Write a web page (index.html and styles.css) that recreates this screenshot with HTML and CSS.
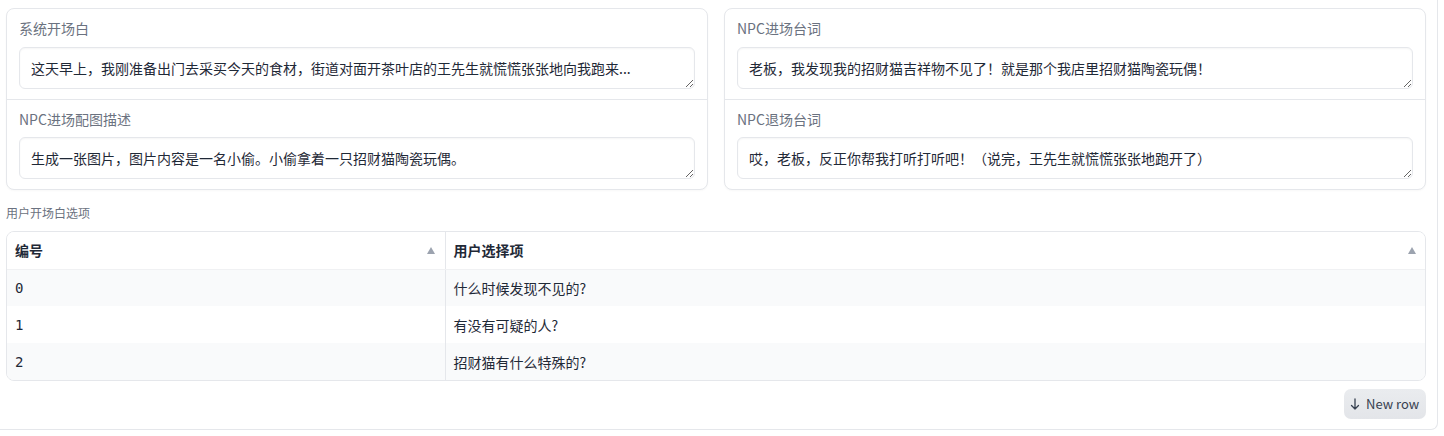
FILE: index.html
```html
<!DOCTYPE html>
<html lang="zh">
<head>
<meta charset="utf-8">
<title>NPC</title>
<link rel="stylesheet" href="styles.css">
</head>
<body>
<div class="outer">
  <div class="cols">
    <div class="panel">
      <div class="field">
        <div class="label">系统开场白</div>
        <textarea class="input" rows="1">这天早上，我刚准备出门去采买今天的食材，街道对面开茶叶店的王先生就慌慌张张地向我跑来...</textarea>
      </div>
      <div class="field">
        <div class="label">NPC进场配图描述</div>
        <textarea class="input" rows="1">生成一张图片，图片内容是一名小偷。小偷拿着一只招财猫陶瓷玩偶。</textarea>
      </div>
    </div>
    <div class="panel">
      <div class="field">
        <div class="label">NPC进场台词</div>
        <textarea class="input" rows="1">老板，我发现我的招财猫吉祥物不见了！就是那个我店里招财猫陶瓷玩偶！</textarea>
      </div>
      <div class="field">
        <div class="label">NPC退场台词</div>
        <textarea class="input" rows="1">哎，老板，反正你帮我打听打听吧！（说完，王先生就慌慌张张地跑开了）</textarea>
      </div>
    </div>
  </div>
  <div class="small-label">用户开场白选项</div>
  <div class="table-wrap">
    <table class="grid">
      <thead>
        <tr>
          <th class="c1"><div class="th-inner"><span>编号</span><span class="sort"></span></div></th>
          <th class="c2"><div class="th-inner"><span>用户选择项</span><span class="sort"></span></div></th>
        </tr>
      </thead>
      <tbody>
        <tr class="odd"><td class="c1 mono">0</td><td class="c2">什么时候发现不见的?</td></tr>
        <tr><td class="c1 mono">1</td><td class="c2">有没有可疑的人?</td></tr>
        <tr class="odd"><td class="c1 mono">2</td><td class="c2">招财猫有什么特殊的?</td></tr>
      </tbody>
    </table>
  </div>
  <div class="actions">
    <button class="btn"><svg class="arrow" width="10" height="12" viewBox="0 0 10 12" fill="none" stroke="#374151" stroke-width="1.3" stroke-linecap="round" stroke-linejoin="round"><path d="M5 1v10M1.5 7.5L5 11l3.5-3.5"/></svg><span>New row</span></button>
  </div>
</div>
</body>
</html>
```
FILE: styles.css
```css
* { box-sizing: border-box; }
html, body { margin: 0; padding: 0; background: #fff; }
body {
  font-family: "Noto Sans CJK SC", "Noto Sans", sans-serif;
  color: #1f2937;
}
.outer {
  width: 1438px;
  height: 430px;
  padding: 8px 11px 0 6px;
  border-right: 1px solid #e5e7eb;
  border-bottom: 1px solid #e5e7eb;
  border-bottom-right-radius: 7px;
  display: flex;
  flex-direction: column;
}
.cols {
  display: grid;
  grid-template-columns: 702px 702px;
  column-gap: 16px;
}
.panel {
  border: 1px solid #e5e7eb;
  border-radius: 8px;
  background: #fff;
  box-shadow: 0 1px 2px rgba(0,0,0,0.03);
}
.field {
  padding: 9px 12px 10px;
  display: flex;
  flex-direction: column;
  gap: 9px;
}
.field + .field {
  border-top: 1px solid #e5e7eb;
  gap: 8px;
}
.label {
  font-size: 14px;
  line-height: 20px;
  color: #6b7280;
}
.input {
  display: block;
  width: 100%;
  height: 42px;
  padding: 10px 11px;
  font-family: "Noto Sans CJK SC", "Noto Sans", sans-serif;
  font-size: 14px;
  line-height: 20px;
  color: #1f2937;
  border: 1px solid #e5e7eb;
  border-radius: 6px;
  background: #fff;
  box-shadow: inset 0 1px 2px rgba(0,0,0,0.04);
  resize: vertical;
  overflow: hidden;
  white-space: nowrap;
  outline: none;
}
.small-label {
  margin-top: 15px;
  font-size: 12px;
  line-height: 16px;
  color: #6b7280;
}
.table-wrap {
  margin-top: 10px;
  border: 1px solid #e5e7eb;
  border-radius: 8px;
  overflow: hidden;
}
.grid {
  width: 100%;
  border-collapse: collapse;
  border-spacing: 0;
  table-layout: fixed;
  font-size: 14px;
}
.grid .c1 { width: 438px; border-right: 1px solid #e5e7eb; }
.grid th {
  height: 37px;
  padding: 0 9px 0 8px;
  text-align: left;
  font-weight: 700;
  color: #1f2937;
  background: #fff;
  border-bottom: 1px solid #f0f1f3;
}
.grid th.c1 { padding-right: 10px; }
.th-inner {
  display: flex;
  align-items: center;
  justify-content: space-between;
}
.sort {
  width: 0;
  height: 0;
  border-left: 4.5px solid transparent;
  border-right: 4.5px solid transparent;
  border-bottom: 7px solid #9ca3af;
}
.grid td {
  height: 37px;
  padding: 0 8px;
  line-height: 20px;
  color: #1f2937;
  background: #fff;
}
.grid tr.odd td { background: #f9fafb; }
.mono {
  font-family: "DejaVu Sans Mono", "Liberation Mono", monospace;
  font-size: 14px;
}
.actions {
  display: flex;
  justify-content: flex-end;
  margin-top: 8px;
}
.btn {
  width: 82px;
  height: 30px;
  padding: 0 0 0 6px;
  border: none;
  border-radius: 7px;
  background: linear-gradient(#eaecef, #e3e5e9);
  color: #374151;
  font-family: "Noto Sans CJK SC", "Noto Sans", sans-serif;
  font-size: 13px;
  line-height: 20px;
  white-space: nowrap;
  display: flex;
  align-items: center;
  gap: 6px;
  cursor: pointer;
}
.arrow { display: block; flex: none; }
```
